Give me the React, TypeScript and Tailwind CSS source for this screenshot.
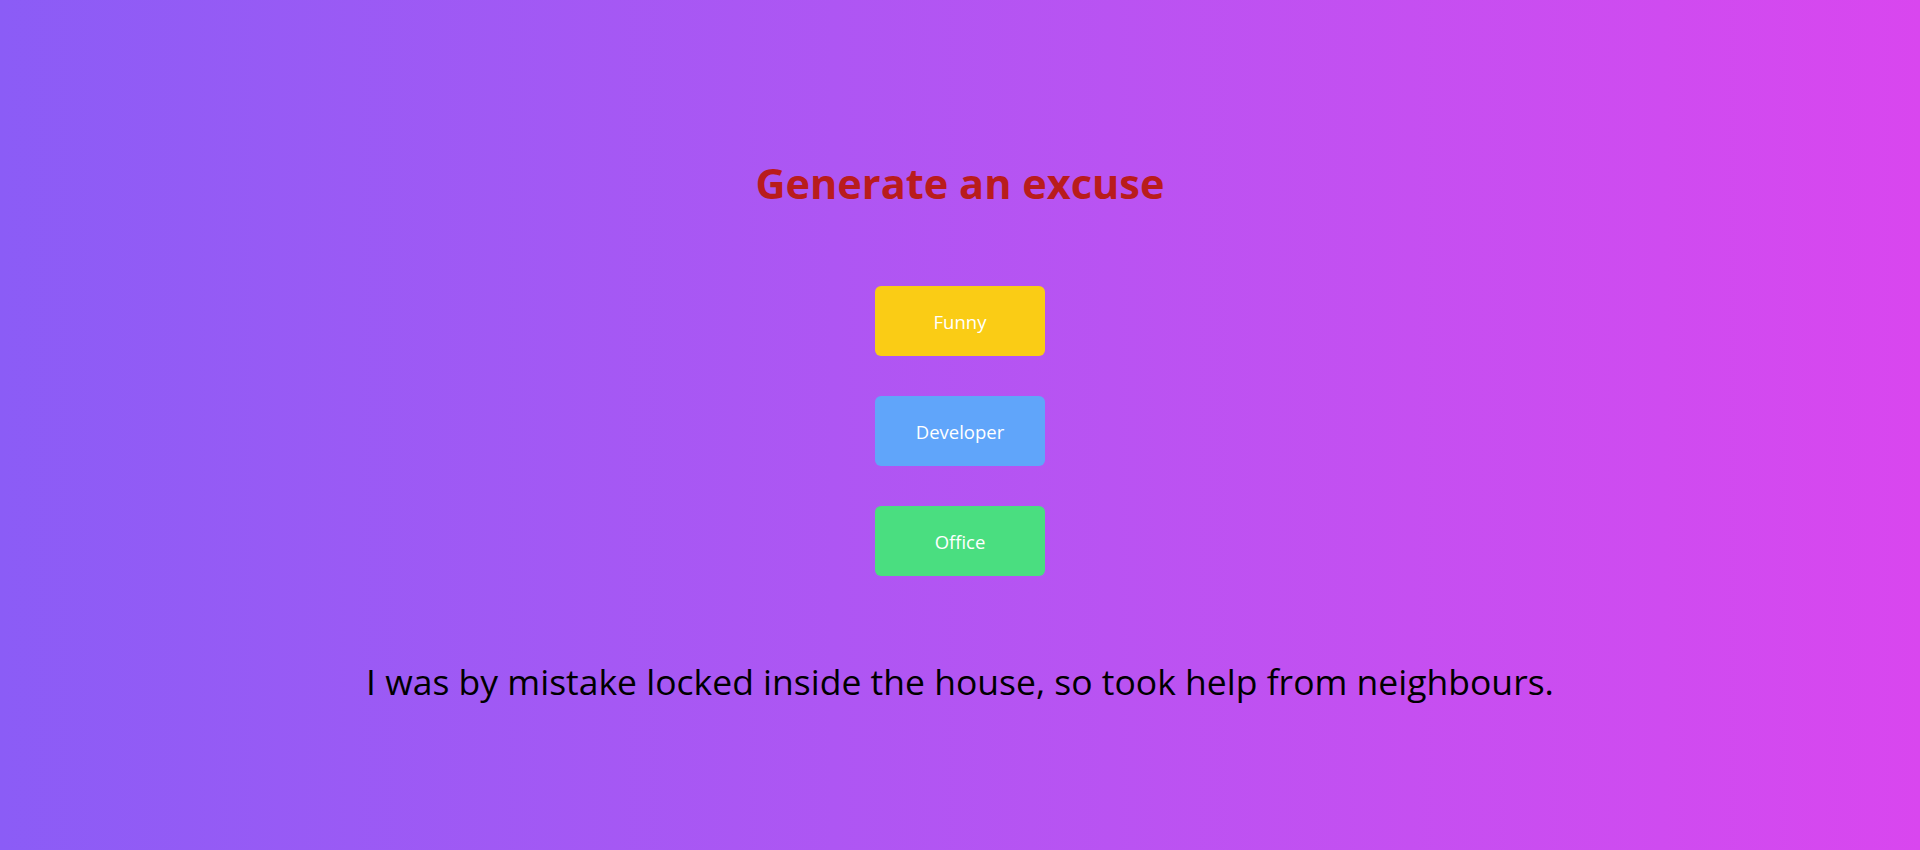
export default function App() {
  return (
    <div
      className="h-[850px] w-full bg-gradient-to-r from-[#8b5cf6] to-[#d946ef] flex flex-col items-center"
      style={{ fontFamily: '"Open Sans", "Noto Sans", sans-serif' }}
    >
      <h1 className="mt-[160px] h-[48px] flex items-center text-[41.5px] leading-none font-bold text-[#b91c1c]">
        Generate an excuse
      </h1>
      <div className="mt-[78px] flex flex-col gap-[40px]">
        <button className="w-[170px] h-[70px] pt-[2px] rounded-md bg-[#facc15] text-white text-[18.5px]">Funny</button>
        <button className="w-[170px] h-[70px] pt-[2px] rounded-md bg-[#60a5fa] text-white text-[18.5px]">Developer</button>
        <button className="w-[170px] h-[70px] pt-[2px] rounded-md bg-[#4ade80] text-white text-[18.5px]">Office</button>
      </div>
      <p className="mt-[86px] h-[40px] flex items-center text-[35.5px] text-black leading-none">
        I was by mistake locked inside the house, so took help from neighbours.
      </p>
    </div>
  );
}
